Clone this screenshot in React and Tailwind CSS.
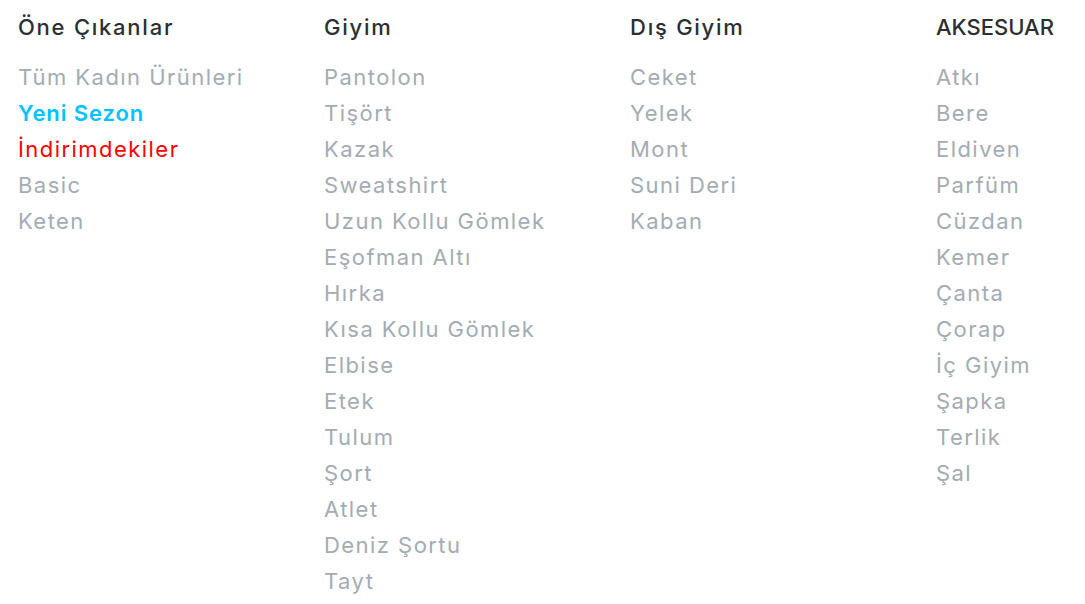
import React from 'react';

const columns = [
  {
    title: 'Öne Çıkanlar',
    items: [
      { label: 'Tüm Kadın Ürünleri' },
      { label: 'Yeni Sezon', tone: 'new' },
      { label: 'İndirimdekiler', tone: 'sale' },
      { label: 'Basic' },
      { label: 'Keten' },
    ],
  },
  {
    title: 'Giyim',
    items: [
      'Pantolon', 'Tişört', 'Kazak', 'Sweatshirt', 'Uzun Kollu Gömlek', 'Eşofman Altı', 'Hırka',
      'Kısa Kollu Gömlek', 'Elbise', 'Etek', 'Tulum', 'Şort', 'Atlet', 'Deniz Şortu', 'Tayt',
    ].map((label) => ({ label })),
  },
  {
    title: 'Dış Giyim',
    items: ['Ceket', 'Yelek', 'Mont', 'Suni Deri', 'Kaban'].map((label) => ({ label })),
  },
  {
    title: 'AKSESUAR',
    caps: true,
    items: [
      'Atkı', 'Bere', 'Eldiven', 'Parfüm', 'Cüzdan', 'Kemer', 'Çanta', 'Çorap', 'İç Giyim',
      'Şapka', 'Terlik', 'Şal',
    ].map((label) => ({ label })),
  },
];

const toneClass = {
  new: 'text-[#00c3ff] font-semibold tracking-[0.9px]',
  sale: 'text-[#ff0000] tracking-[1.45px]',
};

const App = () => {
  return (
    <div
      className="w-[1085px] h-[604px] overflow-hidden bg-white"
      style={{ fontFamily: 'Inter, "Noto Sans", sans-serif' }}
    >
      <div className="flex pl-[18px] pt-[9px]">
        {columns.map((col) => (
          <div key={col.title} className="w-[306px] shrink-0">
            <h3
              className={`h-9 leading-9 text-[22px] font-medium text-[#2b2f33] mb-[14px] ${col.caps ? 'tracking-normal' : 'tracking-[1.75px]'}`}
            >
              {col.title}
            </h3>
            <ul className="flex flex-col">
              {col.items.map((item) => (
                <li
                  key={item.label}
                  className={`h-9 leading-9 text-[22px] whitespace-nowrap ${toneClass[item.tone] || 'text-[#a3acb4] tracking-[1.45px]'}`}
                >
                  {item.label}
                </li>
              ))}
            </ul>
          </div>
        ))}
      </div>
    </div>
  );
};

export default App;
